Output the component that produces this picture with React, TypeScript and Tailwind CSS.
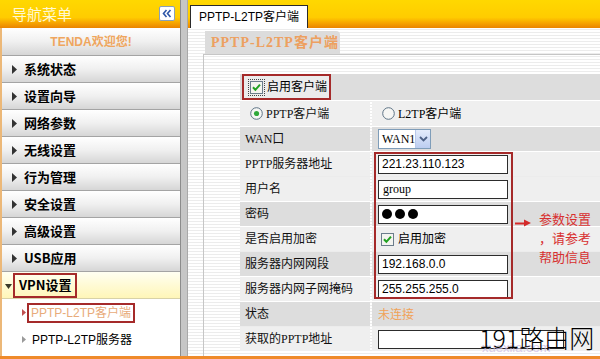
import React from "react";

const SERIF = "font-['Liberation_Serif','Noto_Sans_CJK_SC',serif]";
const SANS = "font-['Liberation_Sans','Noto_Sans_CJK_SC',sans-serif]";
const CJK = "font-['Noto_Sans_CJK_SC',sans-serif]";

const BAR = "bg-[linear-gradient(to_bottom,#ffd800_0%,#ffcc00_62%,#f8a800_80%,#ea8400_100%)]";
const STRIPES =
  "bg-[repeating-linear-gradient(to_bottom,#ffffff_0px,#ffffff_2px,#ececec_2px,#ececec_3px)]";
const ROW_BG = "bg-[linear-gradient(to_bottom,#ffffff_0%,#f0f0f0_50%,#d6d6d6_100%)]";

const MENU = ["系统状态", "设置向导", "网络参数", "无线设置", "行为管理", "安全设置", "高级设置", "USB应用"];

function TriRight({ color = "#333", w = 5, h = 9 }: { color?: string; w?: number; h?: number }) {
  return (
    <svg width={w} height={h} viewBox={`0 0 ${w} ${h}`} className="shrink-0">
      <polygon points={`0,0 ${w},${h / 2} 0,${h}`} fill={color} />
    </svg>
  );
}

function Checkbox({ focus }: { focus?: boolean }) {
  return (
    <span className={`inline-flex p-[1px] ${focus ? "outline outline-1 outline-dotted outline-[#444]" : ""}`}>
      <svg width="13" height="13" viewBox="0 0 13 13">
        <rect x="0.5" y="0.5" width="12" height="12" fill="#f4f4f0" stroke="#6b7d8c" />
        <path d="M3 6.2 L5.4 8.8 L10 3.6" fill="none" stroke="#21a121" strokeWidth="2" />
      </svg>
    </span>
  );
}

function Radio({ on }: { on?: boolean }) {
  return (
    <svg width="13" height="13" viewBox="0 0 13 13" className="shrink-0">
      <circle cx="6.5" cy="6.5" r="5.8" fill="#f6f6f4" stroke="#5d7385" />
      {on && <circle cx="6.5" cy="6.5" r="2.6" fill="#2fa83a" />}
    </svg>
  );
}

function Input({ children, w = "w-[130px]" }: { children?: React.ReactNode; w?: string }) {
  return (
    <div className={`${w} h-[19px] bg-white border border-[#2c2c2c] flex items-center pl-[3px] text-[12px] text-black`}>
      {children}
    </div>
  );
}

function Row({
  label,
  dark,
  children,
  h = "h-[24px]",
}: {
  label: React.ReactNode;
  dark?: boolean;
  children?: React.ReactNode;
  h?: string;
}) {
  const bg = dark ? "bg-[#dddddd]" : "bg-[#efefef]";
  return (
    <div className={`flex ${h} gap-[2px]`}>
      <div className={`w-[130px] shrink-0 ${bg} flex items-center pl-[5px] text-[12px] text-[#111] ${SERIF}`}>{label}</div>
      <div className={`flex-1 ${bg} flex items-center pl-[6px] ${SERIF}`}>{children}</div>
    </div>
  );
}

function Sidebar() {
  return (
    <div className="w-[181px] shrink-0 flex flex-col border-r border-[#8c8c8c] bg-white">
      <div className={`h-[28px] ${BAR} flex items-center justify-between pl-[12px] pr-[5px]`}>
        <span className={`text-[15px] text-[#fff8d4] ${CJK}`}>导航菜单</span>
        <span className="w-[16px] h-[15px] mt-[-2px] rounded-[2px] bg-white border border-[#8aa0b8] flex items-center justify-center">
          <svg width="10" height="9" viewBox="0 0 10 9">
            <path d="M4.5 1 L1.5 4.5 L4.5 8 M8.5 1 L5.5 4.5 L8.5 8" fill="none" stroke="#2d56a8" strokeWidth="1.6" />
          </svg>
        </span>
      </div>
      <div className="flex-1 flex flex-col border-l-2 border-[#ecb878]">
        <div className={`h-[28px] ${ROW_BG} border-b border-[#a4a4a4] flex items-center justify-center`}>
          <span className={`text-[12px] font-bold text-[#efa65e] ${SANS}`}>TENDA欢迎您!</span>
        </div>
        {MENU.map((m) => (
          <div key={m} className={`h-[27px] ${ROW_BG} border-b border-[#a4a4a4] flex items-center pl-[10px] gap-[7px]`}>
            <TriRight />
            <span className={`text-[13px] font-bold text-black ${CJK}`}>{m}</span>
          </div>
        ))}
        <div className="h-[27px] bg-[linear-gradient(to_bottom,#fffff2,#fff6b8)] border-b border-[#d8d2a8] flex items-center pl-[3px] gap-[1px]">
          <svg width="7" height="5" viewBox="0 0 7 5" className="mt-[3px]">
            <polygon points="0,0 7,0 3.5,5" fill="#3a3a2a" />
          </svg>
          <span className={`px-[4px] h-[25px] flex items-center border-2 border-[#a52a2a] text-[13px] font-bold text-black ${CJK}`}>
            VPN设置
          </span>
        </div>
        <div className="h-[27px] flex items-center pl-[20px] gap-[1px]">
          <TriRight color="#c05050" w={4} h={7} />
          <span className={`h-[20px] px-[2px] flex items-center border-2 border-[#a52a2a] text-[12px] text-[#e8ab7a] ${SANS}`}>
            PPTP-L2TP客户端
          </span>
        </div>
        <div className="h-[27px] flex items-center pl-[20px] gap-[6px]">
          <TriRight color="#9a9a9a" w={4} h={7} />
          <span className={`text-[12px] text-black ${SANS}`}>PPTP-L2TP服务器</span>
        </div>
      </div>
    </div>
  );
}

function Content() {
  return (
    <div className={`flex-1 flex flex-col overflow-hidden ${STRIPES}`}>
      <div className={`h-[28px] ${BAR} flex items-end pl-[2px]`}>
        <div className={`h-[23px] px-[8px] bg-white border border-b-0 border-[#2a2a2a] flex items-center text-[12px] text-black ${SANS}`}>
          PPTP-L2TP客户端
        </div>
      </div>
      <div className="h-[26px] flex items-end pl-[17px]">
        <div
          className={`h-[23px] w-[135px] rounded-tr-[4px] bg-[#dcdcdc] flex items-center pl-[6px] text-[14px] font-bold tracking-[1px] text-[#eda060] ${SERIF}`}
        >
          PPTP-L2TP客户端
        </div>
      </div>
      <div className="flex-1 ml-[15px] border-l border-t border-[#c6c6c6] pt-[19px] pl-[36px]">
        <div className="relative flex flex-col gap-[1px] w-[420px]">
          <div className={`h-[26px] bg-[#dddddd] flex items-center pl-[2px] ${SERIF}`}>
            <span className="h-[26px] pl-[5px] pr-[2px] border-2 border-[#a52a2a] bg-[#ececec] flex items-center gap-[3px] text-[12px] text-black">
              <Checkbox focus />
              启用客户端
            </span>
          </div>
          <Row h="h-[25px]" label={<span className="flex items-center gap-[3px] pl-[5px]"><Radio on />PPTP客户端</span>}>
            <span className="flex items-center gap-[3px] ml-[4px] text-[12px] text-black">
              <Radio />
              L2TP客户端
            </span>
          </Row>
          <Row dark label="WAN口">
            <div className="w-[53px] h-[20px] bg-white border border-[#7f9db9] flex items-center justify-between pl-[3px] text-[12px] text-black">
              WAN1
              <span className="w-[16px] h-[18px] bg-[linear-gradient(to_bottom,#e4ecfb,#bccdf0)] border-l border-[#b9c9ea] flex items-center justify-center">
                <svg width="9" height="6" viewBox="0 0 9 6">
                  <path d="M1 1 L4.5 4.5 L8 1" fill="none" stroke="#4d6185" strokeWidth="1.8" />
                </svg>
              </span>
            </div>
          </Row>
          <Row label="PPTP服务器地址">
            <Input><span className={SANS}>221.23.110.123</span></Input>
          </Row>
          <Row label="用户名">
            <Input><span className="pl-[1px]">group</span></Input>
          </Row>
          <Row dark label="密码">
            <Input>
              <span className="flex gap-[3px]">
                <span className="w-[10px] h-[10px] rounded-full bg-black" />
                <span className="w-[10px] h-[10px] rounded-full bg-black" />
                <span className="w-[10px] h-[10px] rounded-full bg-black" />
              </span>
            </Input>
          </Row>
          <Row label="是否启用加密">
            <span className="flex items-center gap-[3px] ml-[2px] text-[12px] text-black">
              <Checkbox />
              启用加密
            </span>
          </Row>
          <Row dark label="服务器内网网段">
            <Input><span className={SANS}>192.168.0.0</span></Input>
          </Row>
          <Row label="服务器内网子网掩码">
            <Input><span className={SANS}>255.255.255.0</span></Input>
          </Row>
          <Row dark label="状态">
            <span className={`text-[12px] text-[#f0a258] ${CJK}`}>未连接</span>
          </Row>
          <Row label="获取的PPTP地址">
            <Input w="w-[186px]" />
          </Row>

          <div className="absolute left-[134px] top-[78px] w-[139px] h-[147px] border-2 border-[#a52a2a] pointer-events-none" />
          <div className="absolute left-[275px] top-[145px] pointer-events-none">
            <svg width="16" height="8" viewBox="0 0 16 8">
              <path d="M0 4.5 L10 4.5" stroke="#d42a2a" strokeWidth="2" />
              <polygon points="9,0.5 16,4 9,7.5" fill="#d42a2a" />
            </svg>
          </div>
          <div className={`absolute left-[299px] top-[135px] flex flex-col items-end leading-[19px] text-[13px] text-[#d83030] ${CJK}`}>
            <span>参数设置</span>
            <span>，请参考</span>
            <span>帮助信息</span>
          </div>
        </div>
      </div>
    </div>
  );
}

export default function App() {
  return (
    <div className="relative w-[600px] h-[359px] overflow-hidden bg-white flex flex-col">
      <div className="h-[356px] flex">
        <Sidebar />
        <div className="w-[7px] shrink-0 bg-[#c6c6c6] border-r border-[#a8a8a8]" />
        <Content />
      </div>
      <div className="h-[3px] bg-[#ef8a2a]" />
      <div className="absolute left-[482px] top-[340px] text-[13px] leading-[15px] text-[#c9b9e6] opacity-70 font-['Liberation_Sans',sans-serif] pointer-events-none">
        xuexila.com
      </div>
      <div className={`absolute left-[479px] top-[320px] text-[25px] font-light leading-[34px] text-black ${CJK} pointer-events-none`}>
        191路由网
      </div>
    </div>
  );
}
